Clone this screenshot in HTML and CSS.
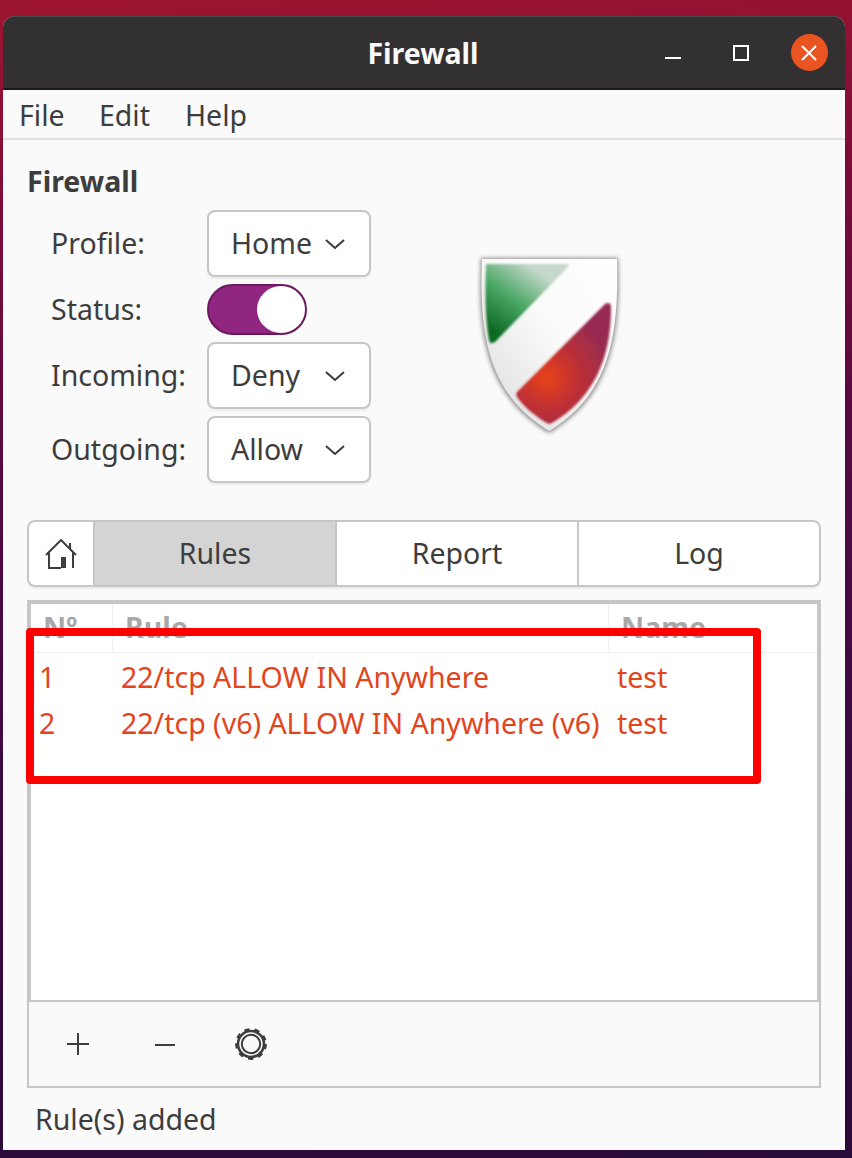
FILE: index.html
```html
<!DOCTYPE html>
<html lang="en">
<head>
<meta charset="utf-8">
<title>Firewall</title>
<link rel="stylesheet" href="styles.css">
</head>
<body>
<div class="window">
  <header class="titlebar">
    <span></span>
    <h1 class="title">Firewall</h1>
    <div class="controls">
      <button class="ctl"><svg width="16" height="16" viewBox="0 0 16 16"><path d="M0 13h16" class="w2"/></svg></button>
      <button class="ctl"><svg width="16" height="16" viewBox="0 0 16 16"><rect x="1" y="1" width="14" height="14" class="w2"/></svg></button>
      <button class="ctl"><span class="close"><svg width="16" height="16" viewBox="0 0 16 16"><path d="M1 1l14 14M15 1L1 15" class="w2"/></svg></span></button>
    </div>
  </header>
  <nav class="menubar"><span class="m1">File</span><span class="m2">Edit</span><span>Help</span></nav>
  <main class="content">
    <h2 class="heading">Firewall</h2>
    <section class="top">
      <div class="form">
        <label class="lab">Profile:</label>
        <div class="select"><span>Home</span><svg class="chev" width="20" height="10" viewBox="0 0 20 10"><path d="M1 1l9 8 9-8"/></svg></div>
        <label class="lab">Status:</label>
        <div class="toggle"><span class="knob"></span></div>
        <label class="lab">Incoming:</label>
        <div class="select"><span>Deny</span><svg class="chev" width="20" height="10" viewBox="0 0 20 10"><path d="M1 1l9 8 9-8"/></svg></div>
        <label class="lab">Outgoing:</label>
        <div class="select"><span>Allow</span><svg class="chev" width="20" height="10" viewBox="0 0 20 10"><path d="M1 1l9 8 9-8"/></svg></div>
      </div>
      <svg class="shield" width="180" height="210" viewBox="460 240 180 210">
        <defs>
          <linearGradient id="white" x1="1" y1="0" x2="0" y2="1"><stop offset="0" stop-color="#fff"/><stop offset=".45" stop-color="#fafafa"/><stop offset="1" stop-color="#dadada"/></linearGradient>
          <linearGradient id="green" x1="0.1" y1="0.85" x2="0.65" y2="0.1"><stop offset="0" stop-color="#0d6a24"/><stop offset=".5" stop-color="#4aa765"/><stop offset="1" stop-color="#c6d8cb"/></linearGradient>
          <radialGradient id="red" gradientUnits="userSpaceOnUse" cx="548" cy="378" r="66"><stop offset="0" stop-color="#e8421a"/><stop offset=".5" stop-color="#bc2f35"/><stop offset="1" stop-color="#962c52"/></radialGradient>
          <filter id="soft"><feGaussianBlur stdDeviation="1"/></filter>
          <filter id="softer" x="-10%" y="-10%" width="120%" height="120%"><feGaussianBlur stdDeviation="2"/></filter>
        </defs>
        <path d="M482 258H619C622 335 613 396 550 433C487 396 478 335 482 258Z" fill="#8c8c8c" filter="url(#softer)"/>
        <path d="M483 259H618C620 335 611 394 550 431C489 394 480 335 483 259Z" fill="url(#white)"/>
        <path d="M487 264H568Q571 264 569 267L496 342Q491 345 490 340C486 318 486 290 487 264Z" fill="url(#green)" filter="url(#soft)"/>
        <path d="M606 304Q612 301 612 308C612 362 592 400 553 423Q550 425 546 422C536 416 524 406 518 397Q516 394 519 391Z" fill="url(#red)" filter="url(#soft)"/>
      </svg>
    </section>
    <div class="tabs">
      <button class="tab home"><svg width="32" height="30" viewBox="0 0 32 30"><path d="M1 16L16 1l15 15M4 14v15h12M28 13v16M25 4v6" class="ic"/><path d="M16 18h5v11h-5z" fill="#3d3d3d"/></svg></button>
      <button class="tab active">Rules</button>
      <button class="tab">Report</button>
      <button class="tab last">Log</button>
    </div>
    <div class="tree">
      <div class="thead">
        <div class="th">Nº</div><div class="th">Rule</div><div class="th">Name</div>
      </div>
      <div class="row"><div>1</div><div>22/tcp ALLOW IN Anywhere</div><div>test</div></div>
      <div class="row"><div>2</div><div>22/tcp (v6) ALLOW IN Anywhere (v6)</div><div>test</div></div>
      <div class="mark"></div>
    </div>
    <div class="toolbar">
      <button class="tool"><svg width="22" height="22" viewBox="0 0 22 22"><path d="M0 11h22M11 0v22" class="ic"/></svg></button>
      <button class="tool"><svg width="20" height="22" viewBox="0 0 20 22"><path d="M0 12h20" class="ic"/></svg></button>
      <button class="tool"><svg class="gear" width="32" height="32" viewBox="0 0 32 32"><circle cx="16" cy="16" r="14.2" class="teeth"/><circle cx="16" cy="16" r="13" class="band"/><circle cx="16" cy="16" r="9.2" class="ic"/></svg></button>
    </div>
    <p class="status">Rule(s) added</p>
  </main>
</div>
</body>
</html>
```

FILE: styles.css
```css
* { box-sizing: border-box; }
html, body { margin: 0; height: 100%; }
body {
  width: 852px;
  height: 1158px;
  overflow: hidden;
  padding: 16px 7px 8px 3px;
  background: linear-gradient(176deg, #9e1530 0%, #7c0c38 18%, #520a42 42%, #3c0a44 65%, #2a0a38 100%);
  font-family: "Noto Sans", "Open Sans", sans-serif;
  font-size: 28.5px;
  color: #3d3d3d;
}
button { font: inherit; color: inherit; border: 0; background: none; padding: 0; }
.window {
  height: 1134px;
  display: flex;
  flex-direction: column;
  background: #fafafa;
  border-radius: 12px 12px 0 0;
  overflow: hidden;
}
.titlebar {
  flex: none;
  height: 74px;
  display: grid;
  grid-template-columns: 1fr auto 1fr;
  align-items: center;
  padding-right: 2px;
  background: #323030;
  border-top: 1px solid #4a4848;
  border-bottom: 2px solid #1c1c1c;
}
.title { margin: 0; font-size: 28.5px; font-weight: 700; color: #fafafa; }
.controls { display: flex; justify-content: flex-end; }
.ctl { width: 68px; height: 40px; display: flex; align-items: center; justify-content: center; }
.close { width: 37px; height: 37px; border-radius: 50%; background: #e95420; display: flex; align-items: center; justify-content: center; }
.w2 { fill: none; stroke: #fff; stroke-width: 2; }
.menubar {
  flex: none;
  height: 50px;
  display: flex;
  align-items: center;
  padding: 1px 0 0 16px;
  border-bottom: 2px solid #e0e0e0;
}
.m1 { width: 80px; }
.m2 { width: 86px; }
.content { flex: 1; display: flex; flex-direction: column; padding: 0 24px; }
.heading { margin: 21px 0 0; height: 49px; line-height: 40px; font-size: 28.5px; font-weight: 700; white-space: nowrap; }
.top { display: flex; height: 310px; }
.form {
  display: grid;
  grid-template-columns: 156px 164px;
  grid-template-rows: 67px 51px 67px 67px;
  row-gap: 7px;
  align-content: start;
  padding-left: 24px;
  width: 344px;
}
.lab { align-self: center; padding-bottom: 2px; white-space: nowrap; }
.select {
  display: flex;
  align-items: center;
  justify-content: space-between;
  padding: 0 24px 2px 22px;
  background: #fff;
  border: 2px solid #c6c6c6;
  border-radius: 8px;
  box-shadow: 0 2px 2px rgba(0, 0, 0, .06);
}
.chev { margin-top: 2px; }
.chev path { fill: none; stroke: #3d3d3d; stroke-width: 2; }
.toggle {
  width: 100px;
  display: flex;
  justify-content: flex-end;
  background: #90267f;
  border: 2px solid #6a1a5e;
  border-radius: 26px;
}
.knob { width: 48px; height: 47px; border-radius: 50%; background: #fff; }
.shield { margin: 30px 0 0 88px; }
.tabs {
  flex: none;
  height: 67px;
  display: flex;
  background: #fff;
  border: 2px solid #c6c6c6;
  border-radius: 8px;
  box-shadow: 0 2px 2px rgba(0, 0, 0, .06);
  overflow: hidden;
}
.tab { flex: 1; padding-bottom: 2px; border-right: 2px solid #c6c6c6; display: flex; align-items: center; justify-content: center; }
.tab.home { flex: none; width: 66px; padding-bottom: 0; }
.tab.active { background: #d4d4d4; }
.tab.last { border-right: 0; }
.ic { fill: none; stroke: #3d3d3d; stroke-width: 2; }
.tree {
  position: relative;
  flex: none;
  height: 402px;
  margin-top: 13px;
  background: #fff;
  border: 4px solid #c6c6c6;
  border-bottom-width: 2px;
}
.thead, .row { display: grid; grid-template-columns: 82px 496px 1fr; }
.thead { height: 49px; border-bottom: 1px solid #f0f0f0; }
.th { padding-left: 12px; line-height: 46px; font-weight: 700; color: #a8a8a8; border-right: 1px solid #f0f0f0; }
.th:last-child { border-right: 0; }
.row { height: 46px; line-height: 48px; color: #e2451c; }
.row > div { padding-left: 8px; white-space: nowrap; }
.mark {
  position: absolute;
  left: -5px;
  top: 24px;
  width: 735px;
  height: 156px;
  border: 8px solid #f00;
  border-radius: 4px;
}
.toolbar {
  flex: none;
  height: 86px;
  display: flex;
  align-items: center;
  padding-left: 5px;
  border: 2px solid #c6c6c6;
  border-top: 0;
}
.tool { width: 87px; height: 80px; display: flex; align-items: center; justify-content: center; }
.gear { margin-right: 2px; }
.teeth { fill: none; stroke: #3d3d3d; stroke-width: 3.4; stroke-dasharray: 5 5; }
.band { fill: none; stroke: #3d3d3d; stroke-width: 2.6; }
.status { margin: 13px 0 0 8px; line-height: 36px; }
```
